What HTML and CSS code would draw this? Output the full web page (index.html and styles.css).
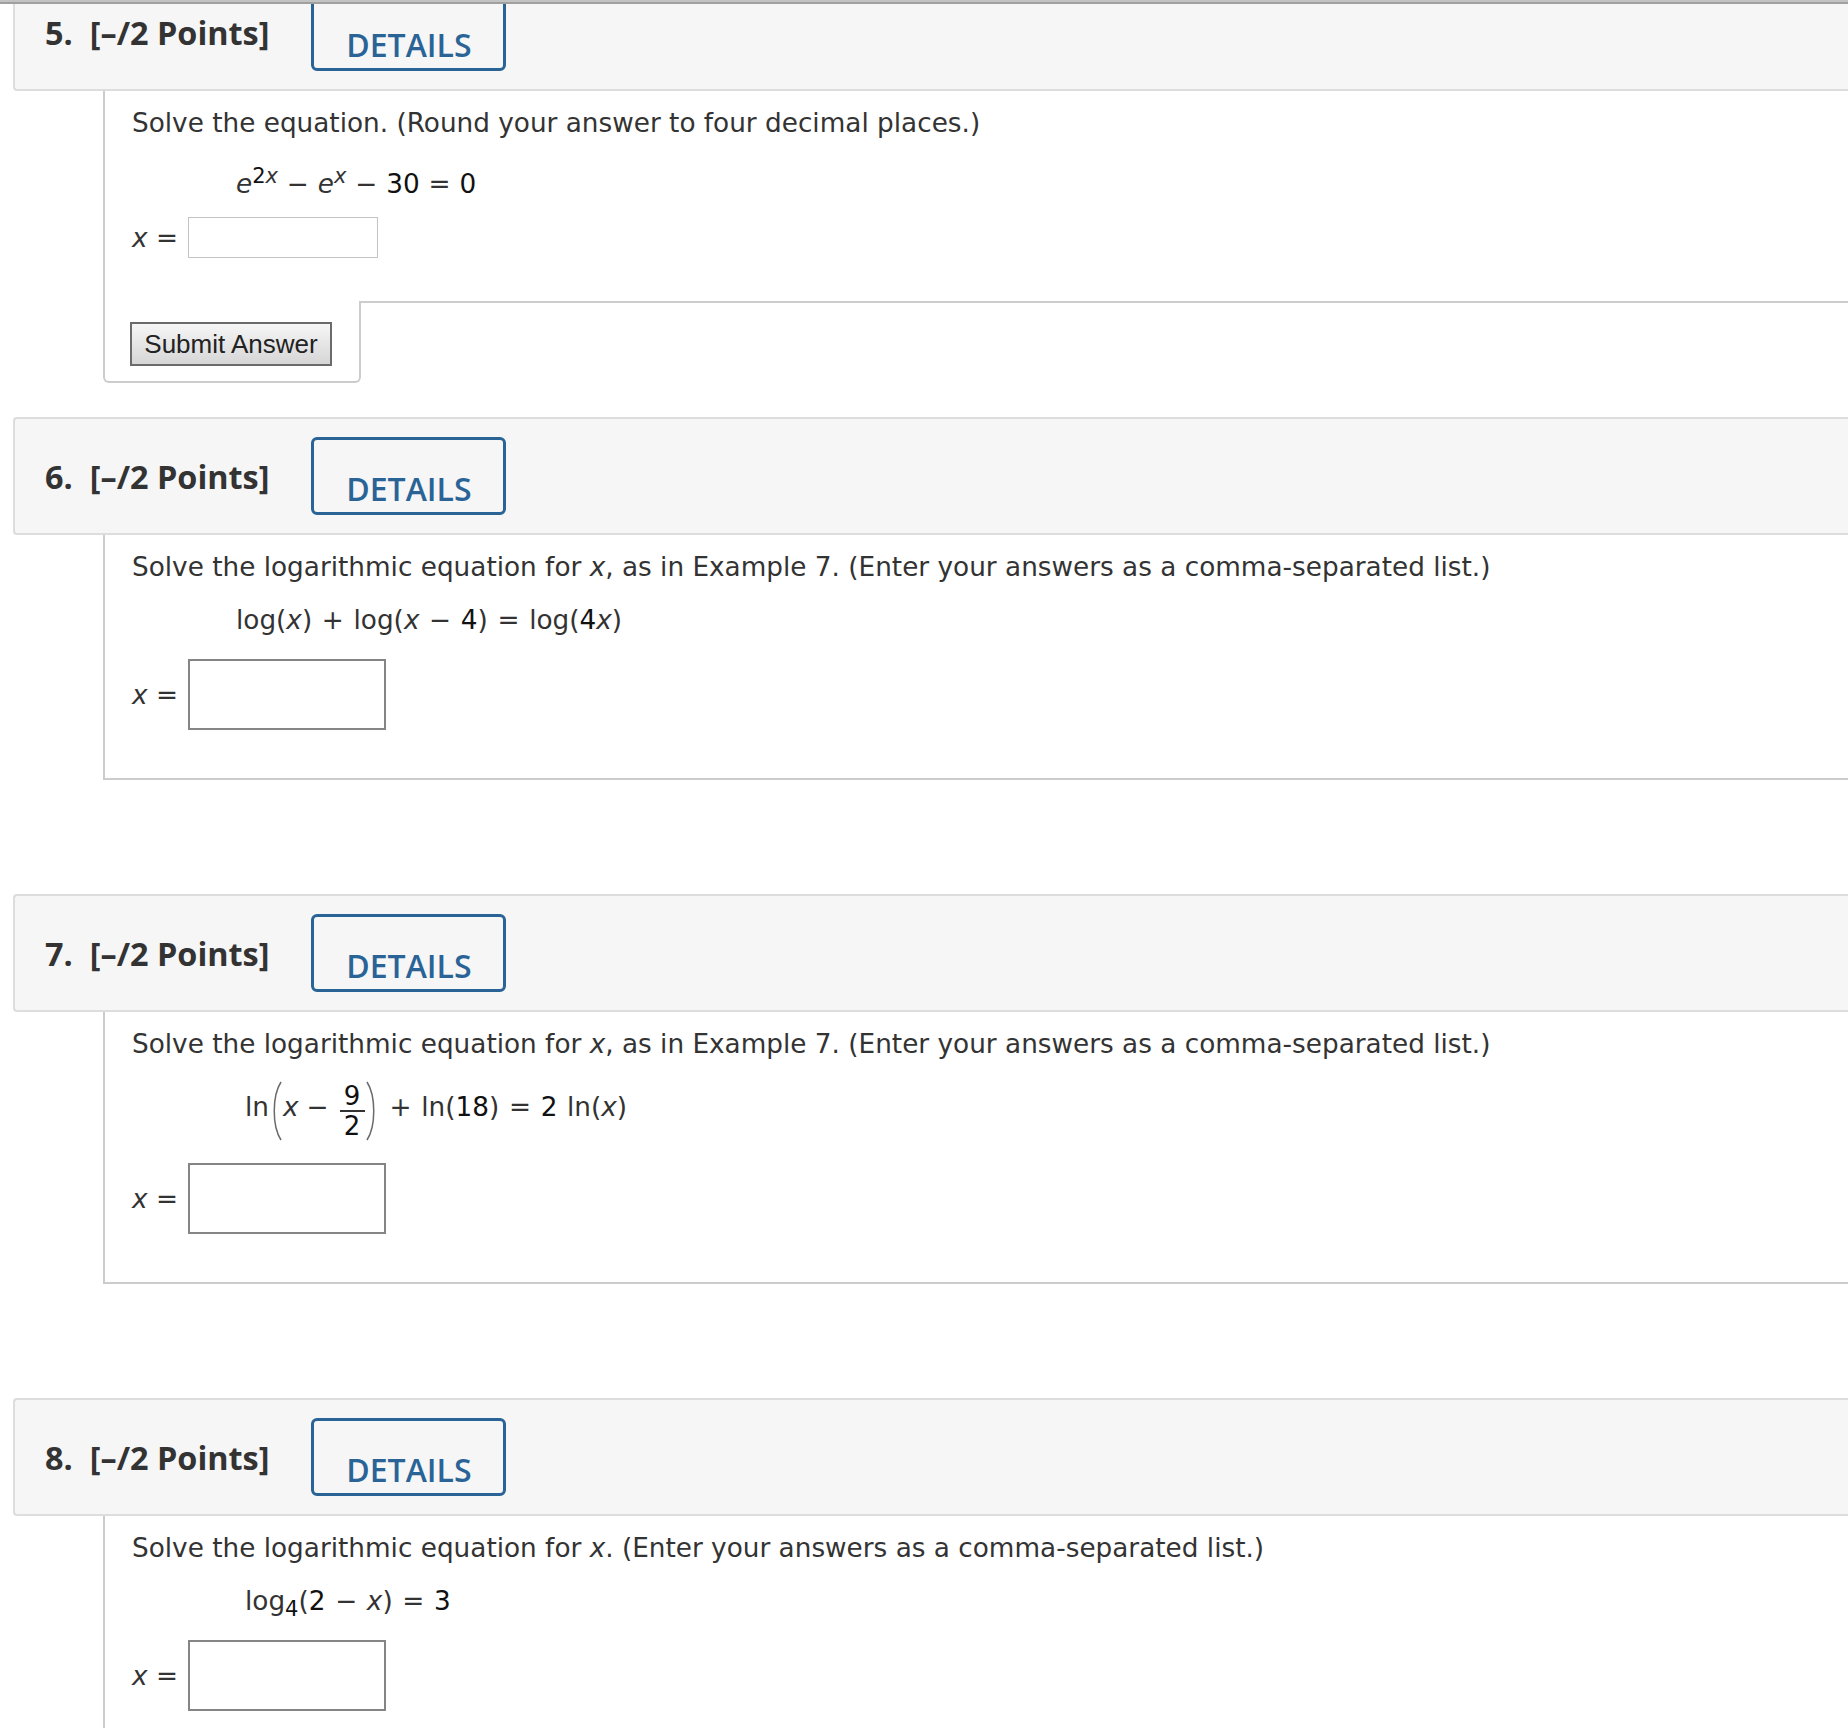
FILE: index.html
```html
<!DOCTYPE html>
<html lang="en">
<head>
<meta charset="utf-8">
<title>Questions</title>
<link rel="stylesheet" href="styles.css">
</head>
<body>
<div class="topbar"></div>
<div class="viewport">
<main class="page">

  <section class="question question-first">
    <header class="qhead">
      <span class="qnum">5.</span><span class="qpts">[–/2 Points]</span>
      <a class="details" href="#">DETAILS</a>
    </header>
    <div class="qbody qbody-first">
      <p class="prompt">Solve the equation. (Round your answer to four decimal places.)</p>
      <div class="eq"><i>e</i><sup><b>2</b><i>x</i></sup> − <i>e</i><sup><i>x</i></sup> − <b>30</b> = <b>0</b></div>
      <div class="answer"><span class="lbl"><i>x</i> =</span><span class="field field-sm"></span></div>
    </div>
    <div class="qfoot">
      <div class="submit-tab"><button class="submit" type="button">Submit Answer</button></div>
      <div class="foot-rest"></div>
    </div>
  </section>

  <section class="question">
    <header class="qhead">
      <span class="qnum">6.</span><span class="qpts">[–/2 Points]</span>
      <a class="details" href="#">DETAILS</a>
    </header>
    <div class="qbody qbody-closed">
      <p class="prompt">Solve the logarithmic equation for <i>x</i>, as in Example 7. (Enter your answers as a comma-separated list.)</p>
      <div class="eq">log(<i>x</i>) + log(<i>x</i> − <b>4</b>) = log(<b>4</b><i>x</i>)</div>
      <div class="answer"><span class="lbl"><i>x</i> =</span><span class="field"></span></div>
    </div>
  </section>

  <section class="question">
    <header class="qhead">
      <span class="qnum">7.</span><span class="qpts">[–/2 Points]</span>
      <a class="details" href="#">DETAILS</a>
    </header>
    <div class="qbody qbody-closed">
      <p class="prompt">Solve the logarithmic equation for <i>x</i>, as in Example 7. (Enter your answers as a comma-separated list.)</p>
      <div class="eq eq-frac">
        <span>ln</span>
        <svg class="paren" width="14" height="60" viewBox="0 0 14 60"><path d="M12 1 C3 15 3 45 12 59" /></svg>
        <i>x</i>
        <span class="op">−</span>
        <span class="frac"><span class="num">9</span><span class="den">2</span></span>
        <svg class="paren" width="14" height="60" viewBox="0 0 14 60"><path d="M2 1 C11 15 11 45 2 59" /></svg>
        <span class="rest">+ ln(<b>18</b>) = <b>2</b> ln(<i>x</i>)</span>
      </div>
      <div class="answer"><span class="lbl"><i>x</i> =</span><span class="field"></span></div>
    </div>
  </section>

  <section class="question">
    <header class="qhead">
      <span class="qnum">8.</span><span class="qpts">[–/2 Points]</span>
      <a class="details" href="#">DETAILS</a>
    </header>
    <div class="qbody qbody-closed">
      <p class="prompt">Solve the logarithmic equation for <i>x</i>. (Enter your answers as a comma-separated list.)</p>
      <div class="eq eq-indent">log<sub><b>4</b></sub>(<b>2</b> − <i>x</i>) = <b>3</b></div>
      <div class="answer"><span class="lbl"><i>x</i> =</span><span class="field"></span></div>
    </div>
  </section>

</main>
</div>
</body>
</html>
```

FILE: styles.css
```css
* { box-sizing: border-box; }

html, body {
  margin: 0;
  padding: 0;
  overflow: hidden;
  background: #ffffff;
}

body {
  font-family: "DejaVu Sans", Verdana, sans-serif;
  font-size: 26.3px;
  color: #333333;
}

.topbar {
  height: 4px;
  background: linear-gradient(#c2c2c2 0, #c2c2c2 2px, #a0a0a0 2px, #a0a0a0 4px);
}

.viewport {
  height: 1724px;
  overflow: hidden;
}

.page {
  width: 1900px;
  margin-left: 13px;
  margin-top: -31px;
}

.question { margin-bottom: 114px; }
.question-first { margin-bottom: 34px; }

/* header bar */
.qhead {
  display: flex;
  align-items: center;
  height: 118px;
  padding-left: 30px;
  background: #f6f6f6;
  border: 2px solid #dddddd;
  border-right: none;
  border-radius: 4px 0 0 4px;
  font-family: "Open Sans", sans-serif;
  font-weight: 700;
  font-size: 32.4px;
  color: #333333;
}

.qnum { margin-right: 17px; }

.details {
  display: block;
  margin-left: 42px;
  width: 195px;
  height: 78px;
  padding-top: 34px;
  border: 3px solid #2a6496;
  border-radius: 6px;
  font-family: "Open Sans", sans-serif;
  font-weight: 600;
  font-size: 32px;
  line-height: 30px;
  text-align: center;
  color: #2a6496;
  text-decoration: none;
}

/* question body */
.qbody {
  margin-left: 90px;
  border-left: 2px solid #cccccc;
  padding: 17px 0 48px 27px;
}

.qbody-closed { border-bottom: 2px solid #cccccc; }

.prompt {
  margin: 0;
  line-height: 30px;
}

i { font-style: italic; }
b { font-weight: normal; color: #111111; }

.eq {
  margin-top: 23px;
  padding-left: 104px;
  line-height: 30px;
  white-space: nowrap;
  word-spacing: 1.3px;
}

sup, sub {
  font-size: 21px;
  line-height: 0;
}

.eq-indent { padding-left: 113px; }

.eq-frac {
  display: flex;
  align-items: center;
  height: 64px;
  margin-top: 16px;
  padding-left: 113px;
}

.paren {
  margin-top: 8px;
}

.paren path {
  fill: none;
  stroke: #6a6a6a;
  stroke-width: 1.5;
}

.op { margin: 0 6px 0 8px; }

.frac {
  display: inline-flex;
  flex-direction: column;
  align-items: center;
  width: 25px;
  margin-left: 5px;
  margin-top: 8px;
  font-size: 26px;
  color: #111111;
}

.num { line-height: 28px; }
.den {
  align-self: stretch;
  text-align: center;
  line-height: 28px;
  border-top: 2px solid #333333;
}

.rest { margin-left: 11px; }

.answer {
  display: flex;
  align-items: center;
  margin-top: 24px;
}

.lbl {
  margin-right: 10px;
  line-height: 30px;
}

.field {
  display: block;
  width: 198px;
  height: 71px;
  border: 2px solid #858585;
  background: #ffffff;
}

.field-sm {
  width: 190px;
  height: 41px;
  border: 1px solid #c4c4c4;
}

/* first question (partially scrolled) */
.qbody-first { padding-bottom: 43px; }
.qbody-first .eq { margin-top: 31px; word-spacing: 0.5px; }
.qbody-first .answer { margin-top: 18px; }

.qfoot {
  display: flex;
  margin-left: 90px;
}

.submit-tab {
  padding: 21px 27px 15px 25px;
  border: 2px solid #cccccc;
  border-top: none;
  border-radius: 0 0 6px 6px;
}

.foot-rest {
  flex: 1;
  border-top: 2px solid #cccccc;
}

.submit {
  display: block;
  width: 202px;
  height: 44px;
  margin: 0;
  padding: 0;
  border: 2px solid #6b6b6b;
  border-radius: 0;
  background: linear-gradient(#f6f6f6, #d6d6d6);
  font-family: "Liberation Sans", Arial, sans-serif;
  font-size: 26px;
  color: #222222;
}
```
